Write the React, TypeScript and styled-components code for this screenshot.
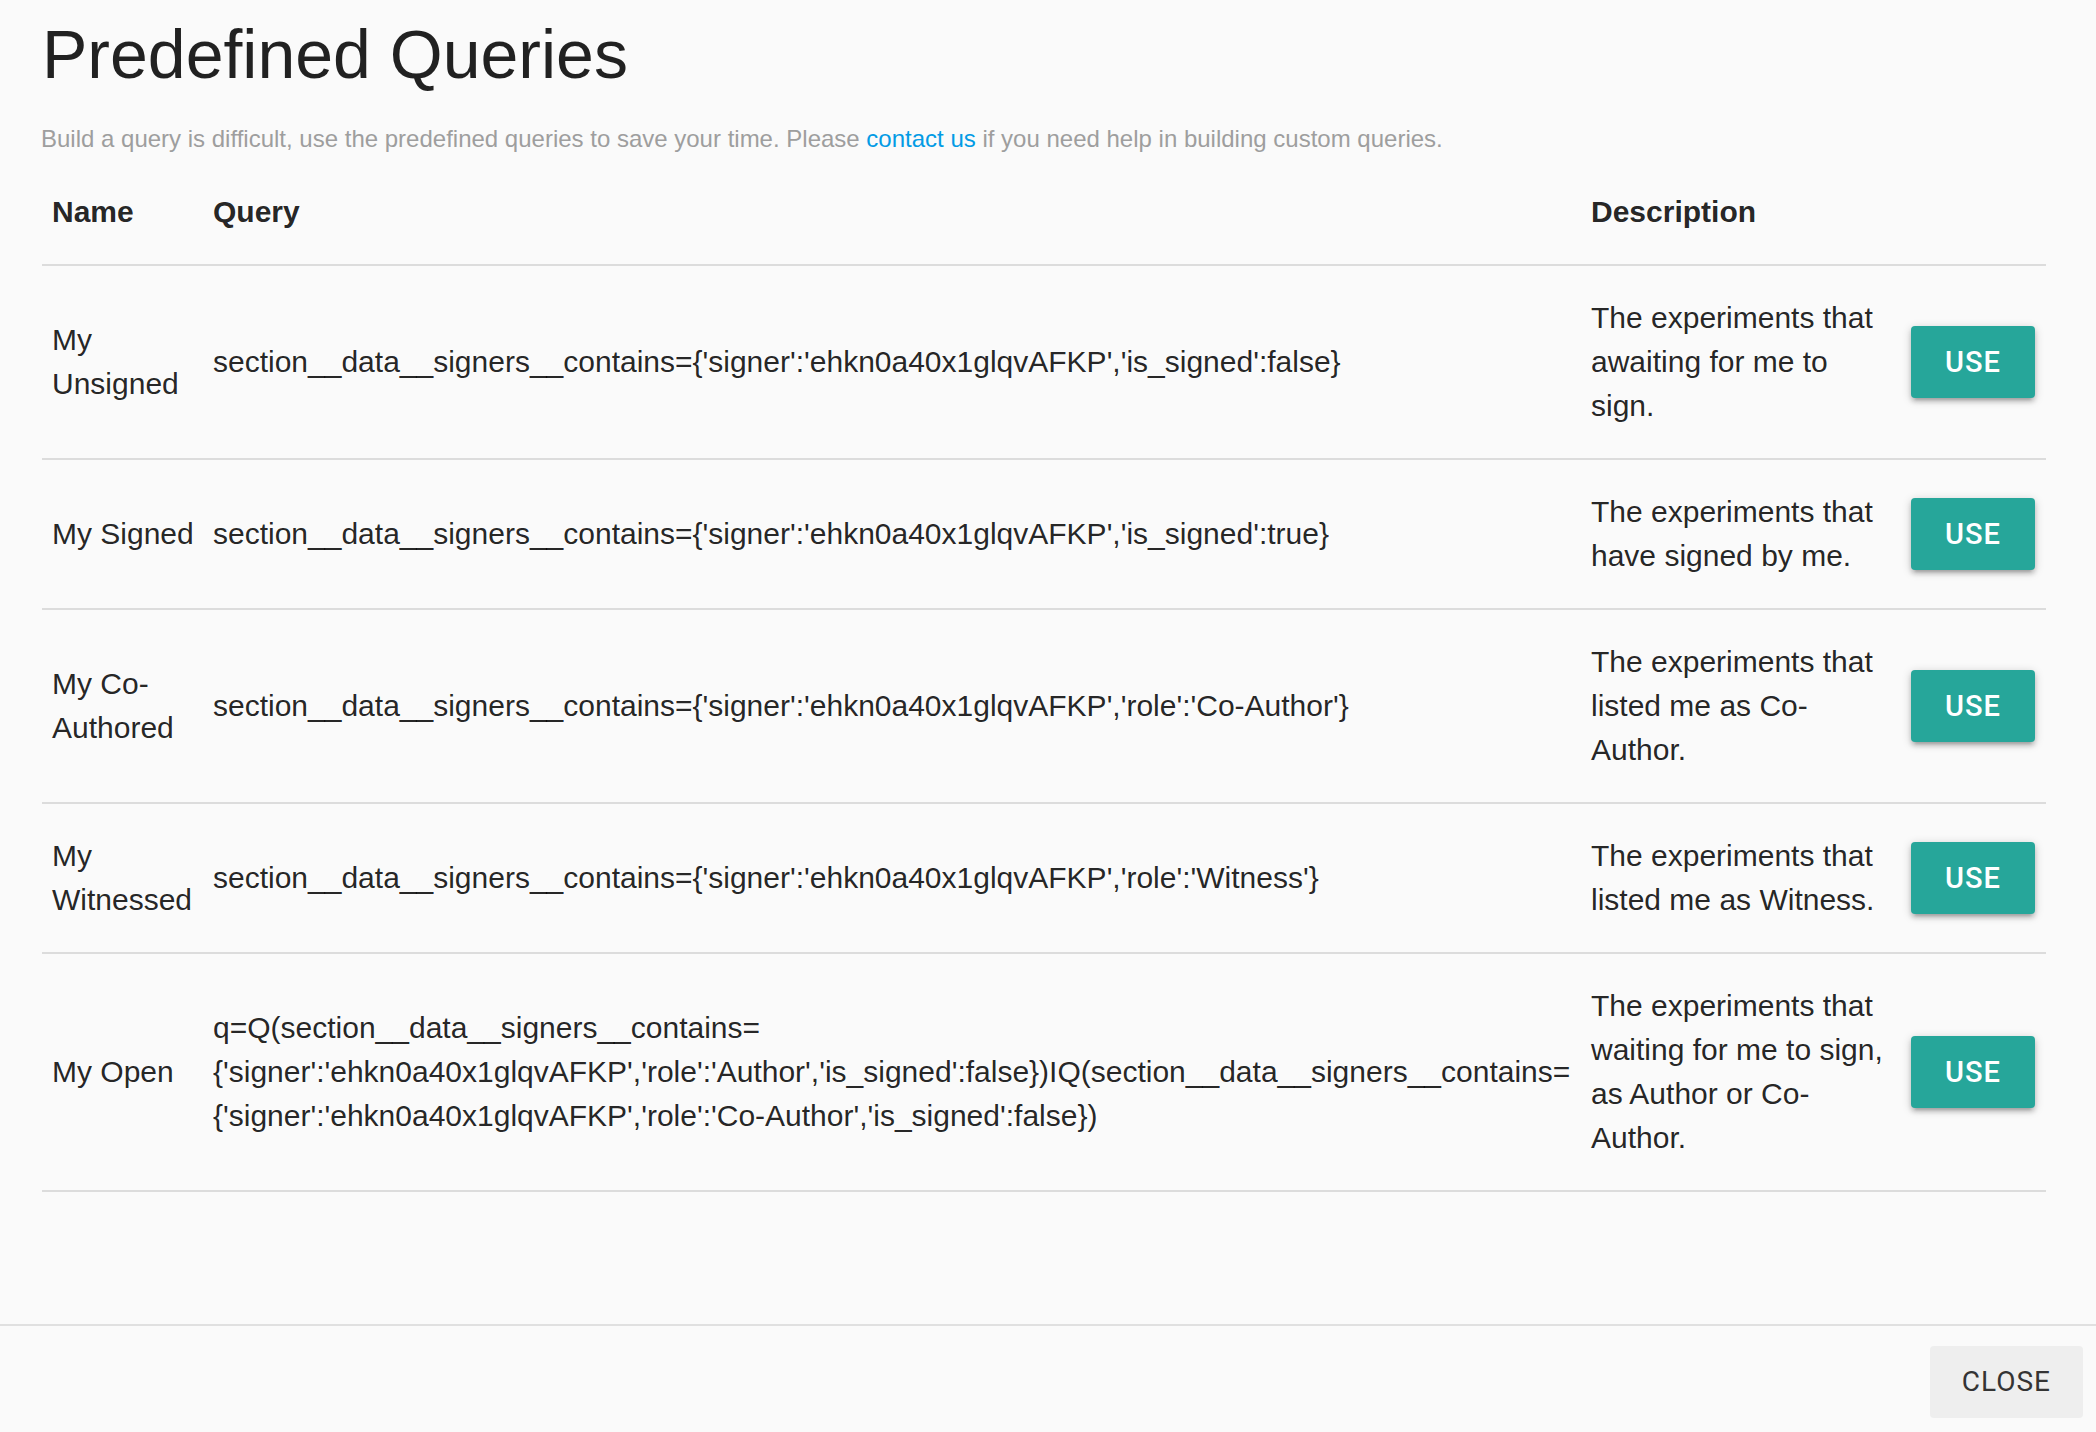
import React from "react";
import styled, { createGlobalStyle } from "styled-components";

const GlobalStyle = createGlobalStyle`
  html, body {
    margin: 0;
    padding: 0;
    background: #fafafa;
  }
  body {
    font-family: "Liberation Sans", Helvetica, Arial, sans-serif;
    color: rgba(0, 0, 0, 0.87);
    -webkit-font-smoothing: antialiased;
  }
  * { box-sizing: border-box; }
`;

const Modal = styled.div`
  height: 1432px;
  width: 2096px;
  overflow: hidden;
  background: #fafafa;
  display: flex;
  flex-direction: column;
`;

const Content = styled.div`
  height: 1324px;
  flex-shrink: 0;
  padding: 0 50px 0 42px;
  overflow: hidden;
`;

const Title = styled.h4`
  margin: 18px 0 0 0;
  font-size: 68px;
  line-height: 72px;
  font-weight: 400;
  color: rgba(0, 0, 0, 0.87);
`;

const Lead = styled.p`
  margin: 31px 0 0 -1px;
  font-size: 24px;
  line-height: 36px;
  color: #9e9e9e;
`;

const Link = styled.a`
  color: #039be5;
  text-decoration: none;
`;

const Table = styled.table`
  margin-top: 3px;
  width: 2004px;
  border-collapse: collapse;
  table-layout: fixed;
  font-size: 30px;
  line-height: 44px;
`;

const HeadCell = styled.th`
  padding: 30px 10px;
  text-align: left;
  font-weight: 700;
  vertical-align: middle;
`;

const Row = styled.tr`
  border-bottom: 2px solid #dcdcdc;
`;

const Cell = styled.td<{ $pr?: number }>`
  padding: 30px ${(p) => p.$pr ?? 10}px 30px 10px;
  vertical-align: middle;
  text-align: left;
`;

const QueryText = styled.span`
  word-break: normal;
  overflow-wrap: normal;
`;

const UseButton = styled.button`
  display: inline-block;
  height: 72px;
  line-height: 72px;
  padding: 0 34px;
  border: none;
  border-radius: 4px;
  background: #26a69a;
  color: #ffffff;
  font-family: Roboto, "Liberation Sans", sans-serif;
  font-size: 29px;
  font-weight: 500;
  letter-spacing: 1px;
  text-transform: uppercase;
  cursor: pointer;
  box-shadow: 0 4px 4px 0 rgba(0, 0, 0, 0.14), 0 6px 2px -4px rgba(0, 0, 0, 0.12),
    0 2px 10px 0 rgba(0, 0, 0, 0.2);
`;

const Footer = styled.div`
  border-top: 2px solid #e0e0e0;
  padding: 8px 13px 8px 12px;
  display: flex;
  justify-content: flex-end;
  flex-shrink: 0;
`;

const FlatButton = styled.button`
  margin: 12px 0;
  height: 72px;
  line-height: 72px;
  padding: 0 32px;
  border: none;
  border-radius: 4px;
  background: #eeeeee;
  color: #343434;
  font-family: Roboto, "Liberation Sans", sans-serif;
  font-size: 28px;
  font-weight: 400;
  letter-spacing: 1px;
  text-transform: uppercase;
  cursor: pointer;
`;

type Query = {
  name: string;
  query: React.ReactNode;
  description: string;
};

const queries: Query[] = [
  {
    name: "My Unsigned",
    query: "section__data__signers__contains={'signer':'ehkn0a40x1glqvAFKP','is_signed':false}",
    description: "The experiments that awaiting for me to sign.",
  },
  {
    name: "My Signed",
    query: "section__data__signers__contains={'signer':'ehkn0a40x1glqvAFKP','is_signed':true}",
    description: "The experiments that have signed by me.",
  },
  {
    name: "My Co-Authored",
    query: "section__data__signers__contains={'signer':'ehkn0a40x1glqvAFKP','role':'Co-Author'}",
    description: "The experiments that listed me as Co-Author.",
  },
  {
    name: "My Witnessed",
    query: "section__data__signers__contains={'signer':'ehkn0a40x1glqvAFKP','role':'Witness'}",
    description: "The experiments that listed me as Witness.",
  },
  {
    name: "My Open",
    query: (
      <>
        q=Q(section__data__signers__contains=
        <wbr />
        {"{'signer':'ehkn0a40x1glqvAFKP','role':'Author','is_signed':false})IQ(section__data__signers__contains="}
        <wbr />
        {"{'signer':'ehkn0a40x1glqvAFKP','role':'Co-Author','is_signed':false})"}
      </>
    ),
    description: "The experiments that waiting for me to sign, as Author or Co-Author.",
  },
];

export default function App() {
  return (
    <>
      <GlobalStyle />
      <Modal>
        <Content>
          <Title>Predefined Queries</Title>
          <Lead>
            Build a query is difficult, use the predefined queries to save your time. Please{" "}
            <Link href="#">contact us</Link> if you need help in building custom queries.
          </Lead>
          <Table>
            <colgroup>
              <col style={{ width: 161 }} />
              <col style={{ width: 1378 }} />
              <col style={{ width: 320 }} />
              <col style={{ width: 145 }} />
            </colgroup>
            <thead>
              <Row>
                <HeadCell>Name</HeadCell>
                <HeadCell>Query</HeadCell>
                <HeadCell>Description</HeadCell>
                <HeadCell />
              </Row>
            </thead>
            <tbody>
              {queries.map((q) => (
                <Row key={q.name}>
                  <Cell $pr={4}>{q.name}</Cell>
                  <Cell>
                    <QueryText>{q.query}</QueryText>
                  </Cell>
                  <Cell>{q.description}</Cell>
                  <Cell>
                    <UseButton>Use</UseButton>
                  </Cell>
                </Row>
              ))}
            </tbody>
          </Table>
        </Content>
        <Footer>
          <FlatButton>Close</FlatButton>
        </Footer>
      </Modal>
    </>
  );
}
